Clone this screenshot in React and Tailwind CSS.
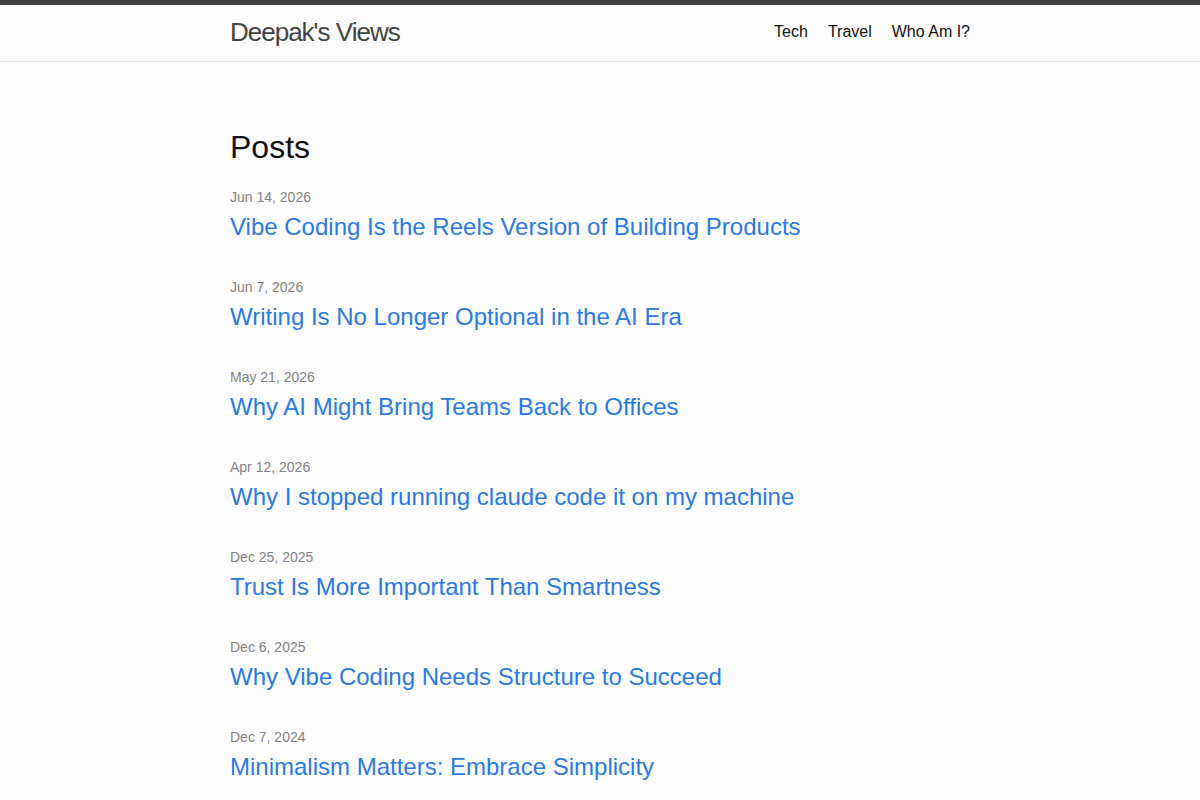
const posts = [
  { date: "Jun 14, 2026", title: "Vibe Coding Is the Reels Version of Building Products" },
  { date: "Jun 7, 2026", title: "Writing Is No Longer Optional in the AI Era" },
  { date: "May 21, 2026", title: "Why AI Might Bring Teams Back to Offices" },
  { date: "Apr 12, 2026", title: "Why I stopped running claude code it on my machine" },
  { date: "Dec 25, 2025", title: "Trust Is More Important Than Smartness" },
  { date: "Dec 6, 2025", title: "Why Vibe Coding Needs Structure to Succeed" },
  { date: "Dec 7, 2024", title: "Minimalism Matters: Embrace Simplicity" },
];

export default function App() {
  return (
    <div className="min-h-screen bg-[#fdfdfd] text-[#111] font-['Liberation_Sans',Arial,sans-serif] text-base leading-normal">
      {/* header */}
      <header className="border-t-[5px] border-t-[#424242] border-b border-b-[#e8e8e8] min-h-[62px]">
        <div className="max-w-[800px] mx-auto px-[30px] flex justify-between">
          <a href="#" className="text-[26px] leading-[54px] tracking-[-1px] text-[#424242]">
            Deepak's Views
          </a>
          <nav className="flex gap-5 leading-[54px] text-[#111]">
            <a href="#">Tech</a>
            <a href="#">Travel</a>
            <a href="#">Who Am I?</a>
          </nav>
        </div>
      </header>

      {/* posts */}
      <main className="max-w-[800px] mx-auto px-[30px] pt-[61px] pb-[30px]">
        <h2 className="text-[32px] leading-[48px] mb-[16px]">Posts</h2>
        <ul>
          {posts.map((p) => (
            <li key={p.title} className="mb-[32px]">
              <span className="block text-sm leading-[21px] text-[#828282]">{p.date}</span>
              <h3 className="text-2xl leading-9 mt-[1px]">
                <a href="#" className="text-[#2a7ae2]">{p.title}</a>
              </h3>
            </li>
          ))}
        </ul>
      </main>
    </div>
  );
}
